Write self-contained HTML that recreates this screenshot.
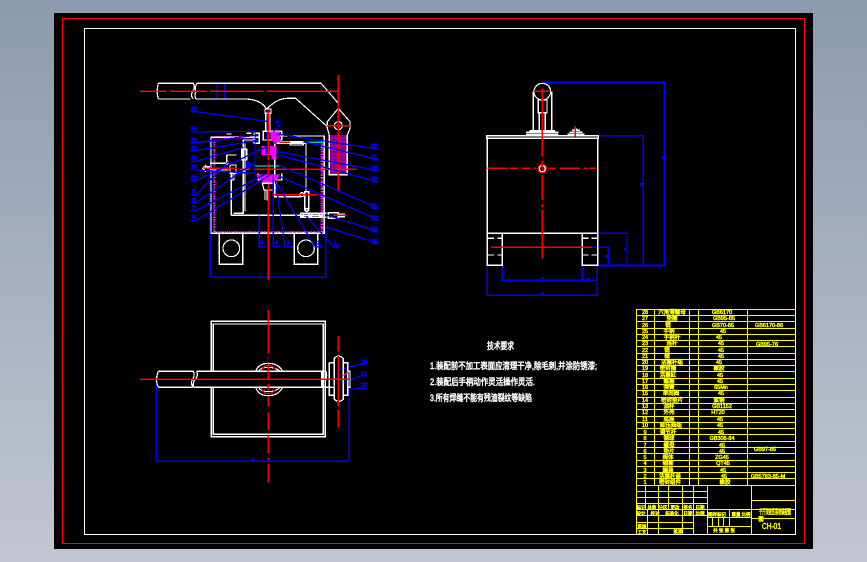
<!DOCTYPE html>
<html><head><meta charset="utf-8"><style>
html,body{margin:0;padding:0;width:867px;height:562px;overflow:hidden;background:linear-gradient(180deg,#8c9aaf 0%,#a8b0c0 50%,#c2c6d1 100%)}
svg{position:absolute;left:0;top:0;display:block}
text{font-family:"Liberation Sans","Noto Sans CJK SC",sans-serif}
</style></head><body>
<svg width="867" height="562" viewBox="0 0 867 562" shape-rendering="crispEdges" fill="none">
<defs>
<pattern id="h" width="4" height="4" patternUnits="userSpaceOnUse"><rect width="4" height="4" fill="#000"/><path d="M0 4L4 0M0 0L4 4" stroke="#ff00ff" stroke-width="1.4"/></pattern>
</defs>
<rect x="54" y="13" width="759" height="536" fill="#000"/>
<rect x="62.5" y="18.5" width="742" height="525" stroke="#f00" stroke-width="1.2"/>
<rect x="84.5" y="28.5" width="711" height="506" stroke="#fff" stroke-width="1.2"/>

<!-- FRONT VIEW -->
<g transform="translate(130 60) scale(.33333)" stroke-width="3.6">
<rect x="598" y="225" width="54" height="119" fill="url(#h)"/>
<path stroke="#00f" stroke-width="4" d="M241 232V652H587V500M415 640V652M262 70H284V117H262Z"/>
<path stroke="#f0f" stroke-width="8" stroke-dasharray="4 3" d="M253 232H385M253 232V517H576V240"/>
<path stroke="#fff" stroke-width="2" stroke-dasharray="2 8" d="M253 232H385M253 232V517H576V240"/>
<path stroke="#fff" d="M85 70H190M85 117H181M85 70Q78 94 85 117M190 70Q197 84 188 94Q180 106 190 117M201 70Q192 84 198 94Q192 108 198 117M201 70H573L625 130M198 117H348M348 117Q392 118 410 147Q442 114 475 115H497L592 200M592 185L625 145L660 185V205L652 225M592 185V205L598 225M598 225V344H652V225"/>
<circle cx="625" cy="197" r="12" stroke="#fff"/>
<path stroke="#fff" d="M243 520V232H385M243 520H583V228H450M268 520V613H338V520M493 520V613H563V520M405 147H423V160H405ZM407 160V215M420 160V215"/>
<circle cx="304" cy="565" r="25" stroke="#fff"/><circle cx="528" cy="565" r="25" stroke="#fff"/>
<path stroke="#fff" d="M304 466H578M310 460H340V240H385M304 466V340M345 250V455M440 250H528V395M434 250V400M450 245H520M373 220H388V250H373ZM400 214H455V240H400ZM385 340V360H455V340M397 370H440L434 390H402ZM405 390V420M412 390V422M434 370V410M432 404H515M432 410H515M524 395H536V450H524ZM510 460H590M510 472H590M595 458H625V475H595ZM625 462H645M625 470H645M290 285H320M290 285V315M295 310H240M295 330H240M225 320H240M218 325L228 315M218 325L228 335M300 315H318V340H300ZM305 340V360H312V340M335 268H350V300H335ZM350 220H365M290 222H305M480 245H520V255H480Z"/>
<circle cx="516" cy="404" r="6" stroke="#fff"/><circle cx="516" cy="465" r="5" stroke="#fff"/><circle cx="541" cy="465" r="5" stroke="#fff"/><circle cx="572" cy="465" r="5" stroke="#fff"/><circle cx="530" cy="450" r="5" stroke="#fff"/>
<path fill="#f0f" stroke="none" d="M395 258H440V298H425V285H395ZM378 344H450L432 368H400ZM420 214H450V248H430L422 232Z"/>
<path fill="#00f" stroke="none" d="M406 258H420V282H406ZM406 216H420V236H406ZM347 305H362V325H347Z"/>
<path stroke="#0ff" stroke-width="4" d="M372 318H455"/>
<path stroke="#0c8" d="M520 247H580"/>
<path stroke="#f00" d="M625 45V395M30 94H110M120 94H230M240 94H400M410 94H625M415 150V300M415 310V360M415 372V660M330 328H360M370 328H680M590 197H660M425 404H562M220 325H320M450 247H480M610 466H650"/>
<path stroke="#00f" stroke-width="4" d="M182 155H198L410 184M182 216H198L375 214V360M182 248H198L385 225M182 272H198L385 240M182 304H198L340 262M182 330H198L375 340M182 362H198L410 260M182 404H198L300 300M182 428H198L370 310M182 452H198L410 340M182 482H198L420 345M440 195H450L430 215M725 267H745L440 222M725 299H745L520 245M725 332H745L445 275M725 366H745L445 285M725 445H745L445 315M725 480H745L450 350M725 515H745L590 465M725 550H745L585 500M388 466V560H408M430 350V560H448M436 360L465 560H490M440 370L555 560H578M530 470L610 560H628"/>
<g fill="#00f" stroke="#00f" stroke-width="1.5" font-size="17" font-weight="bold" text-anchor="middle">
<text x="191" y="152">15</text><text x="191" y="212">16</text><text x="191" y="245">14</text><text x="191" y="268">13</text><text x="191" y="299">18</text><text x="191" y="325">10</text><text x="191" y="358">19</text><text x="191" y="399">9</text><text x="191" y="424">8</text><text x="191" y="448">7</text><text x="191" y="477">6</text><text x="442" y="191">6</text><text x="732" y="263">12</text><text x="732" y="295">11</text><text x="732" y="329">10</text><text x="732" y="361">19</text><text x="732" y="442">21</text><text x="732" y="478">22</text><text x="732" y="512">23</text><text x="732" y="547">24</text><text x="396" y="554">5</text><text x="438" y="554">4</text><text x="476" y="554">3</text><text x="566" y="554">2</text><text x="615" y="554">1</text>
</g>
</g>

<!-- SIDE VIEW -->
<g transform="translate(470 70) scale(.33333)" stroke-width="3.6">
<path stroke="#00f" stroke-width="4" d="M385 197H520V586M383 490H471V583M365 532H415V583M97 586V631H378M52 586V676H382V586M337 586V631"/>
<path stroke="#00f" stroke-width="6" d="M217 37H583V586H383"/>
<path fill="#00f" stroke="none" d="M576 258h8v11h-8zM510 339h10v9h-10zM462 534h5v7h-5zM405 555h9v7h-9zM213 621h8v9h-8zM351 623h8v8h-8zM213 666h8v10h-8z"/>
<path stroke="#fff" d="M190 65V183M245 65V183M205 90H231V128H205ZM208 128V180M226 128V180M178 182H255M168 187H265M168 193H265M292 193H343M298 187H337M306 181H330M312 177H322M50 197H385V205H50ZM52 205H383V490M52 205V586H97V490M52 490H383V586H337V490M52 505H72M82 505H97M337 505H355M365 505H383M52 555H72M82 555H97M337 555H355M365 555H383"/>
<circle cx="217" cy="65" r="25" stroke="#fff"/>
<circle cx="217" cy="296" r="13" stroke="#f00"/>
<circle cx="217" cy="296" r="9" stroke="#fff"/>
<path stroke="#f00" d="M217 55V260M217 272V300M217 315V390M217 402V412M217 420V565M192 64H242M52 295H112M118 295H145M155 295H182M190 295H198M235 295H255M268 295H330M342 295H352M358 295H380M63 532H365M316 168V200"/>
</g>

<!-- TOP VIEW -->
<g transform="translate(140 310) scale(.33333)" stroke-width="3.6">
<path stroke="#00f" stroke-width="4" d="M49 210V454H622M628 235V454M600 178L660 163H680M612 218L660 198H680M618 240L652 235H680"/>
<path fill="#00f" stroke="none" d="M334 445h9v9h-9z"/>
<g fill="#00f" stroke="#00f" stroke-width="1.5" font-size="17" font-weight="bold" text-anchor="middle"><text x="672" y="161">20</text><text x="672" y="196">21</text><text x="672" y="229">13</text></g>
<path stroke="#fff" d="M214 34H556V380H214ZM220 42H550V373H220Z"/>
<path stroke="#fff" d="M347 184Q355 160 385 160Q415 160 428 184M355 184Q362 172 385 172Q408 172 420 184M347 232Q355 257 385 257Q415 257 428 232M355 232Q362 245 385 245Q408 245 420 232"/>
<path stroke="#f00" d="M363 184Q370 166 385 166Q400 166 411 184M363 232Q370 251 385 251Q400 251 411 232"/>
<rect x="160" y="185" width="385" height="46" fill="#000" stroke="none"/>
<path stroke="#fff" d="M55 184H160M55 232H158M55 184Q44 208 55 232M160 184Q166 195 158 208Q150 220 160 232M170 184H558M162 232H545M170 184Q176 195 166 208Q156 220 162 232M545 184V232H584M558 184Q562 195 558 208H584M568 158H582M568 158V256H582M611 158H623V256H611M623 184H630V232H623M583 145Q595 132 610 145V268Q597 280 583 268Z"/>
<path stroke="#f0f" d="M610 197L625 185M578 232L583 228"/>
<path stroke="#f00" d="M385 0V130M385 142V146M385 160V210M385 222V240M385 260V290M385 308V360M385 374V430M385 444V450M385 462V518M0 208H630M595 78V125M595 138V290M595 300V353"/>
</g>

<!-- NOTES -->
<g fill="#fff" stroke="#fff" stroke-width=".55" font-size="9" shape-rendering="auto">
<text x="487" y="349" textLength="27" lengthAdjust="spacingAndGlyphs">技术要求</text>
<text x="430" y="369" textLength="167" lengthAdjust="spacingAndGlyphs">1.装配前不加工表面应清理干净,除毛刺,并涂防锈漆;</text>
<text x="430" y="385" textLength="105" lengthAdjust="spacingAndGlyphs">2.装配后手柄动作灵活操作灵活.</text>
<text x="430" y="401" textLength="102" lengthAdjust="spacingAndGlyphs">3.所有焊缝不能有残渣裂纹等缺陷</text>
</g>

<!-- TABLE -->
<g stroke="#ff0" stroke-width="1">
<path d="M636.5 309.5H795M636.5 315.5H795M636.5 321.5H795M636.5 328.5H795M636.5 334.5H795M636.5 340.5H795M636.5 346.5H795M636.5 353.5H795M636.5 359.5H795M636.5 365.5H795M636.5 371.5H795M636.5 378.5H795M636.5 384.5H795M636.5 390.5H795M636.5 397.5H795M636.5 403.5H795M636.5 409.5H795M636.5 416.5H795M636.5 422.5H795M636.5 428.5H795M636.5 434.5H795M636.5 441.5H795M636.5 447.5H795M636.5 453.5H795M636.5 460.5H795M636.5 466.5H795M636.5 472.5H795M636.5 478.5H795M636.5 485.5H795"/>
<path d="M636.5 309V534M654.5 309V485M689.5 309V485M698.5 309V485M747.5 309V485"/>
<path d="M636 491.5H707M636 497.5H707M636 503.5H707M636 509.5H707M636 515.5H707M636 522.5H693M636 528.5H693"/>
<path d="M645.5 485V509M658.5 485V534M668.5 485V509M682.5 485V534M693.5 485V534M647.5 509V534"/>
<path d="M707.5 485V534M751.5 485V534M707 509.5H795M707 517.5H751M707 526.5H751M751 500.5H795M751 518.5H795M729.5 509V526M712.5 517V526M718.5 517V526M723.5 517V526"/>
</g>
<g fill="#ff0" stroke="#ff0" stroke-width=".45" font-size="5.5" shape-rendering="auto" text-anchor="middle">
<text x="645" y="314">28</text><text x="672" y="314">六角薄螺母</text><text x="722" y="314">GB6170</text>
<text x="645" y="320">27</text><text x="672" y="320">垫圈</text><text x="724" y="320">GB95-85</text><text x="769" y="327">GB6170-86</text>
<text x="645" y="327">26</text><text x="668" y="327">销</text><text x="723" y="327">GB70-85</text>
<text x="645" y="333">25</text><text x="669" y="333">手柄</text><text x="723" y="333">45</text>
<text x="645" y="339">24</text><text x="672" y="339">手柄杆</text><text x="719" y="339">45</text><text x="767" y="346">GB95-76</text>
<text x="645" y="345">23</text><text x="672" y="345">连杆</text><text x="721" y="345">45</text>
<text x="645" y="352">22</text><text x="667" y="352">销</text><text x="721" y="352">45</text>
<text x="645" y="358">21</text><text x="667" y="358">轴</text><text x="721" y="358">45</text>
<text x="645" y="364">20</text><text x="672" y="364">活塞杆组</text><text x="719" y="364">45</text>
<text x="645" y="370">19</text><text x="668" y="370">密封圈</text><text x="719" y="370">橡胶</text>
<text x="645" y="377">18</text><text x="668" y="377">活塞缸</text><text x="720" y="377">45</text>
<text x="645" y="383">17</text><text x="669" y="383">螺塞</text><text x="720" y="383">45</text>
<text x="645" y="389">16</text><text x="669" y="389">弹簧</text><text x="721" y="389">65Mn</text>
<text x="645" y="395">15</text><text x="671" y="395">单向阀</text><text x="721" y="395">45</text>
<text x="645" y="402">14</text><text x="672" y="402">密封垫片</text><text x="719" y="402">紫铜</text>
<text x="645" y="408">13</text><text x="669" y="408">油杯</text><text x="722" y="408">GB1152</text>
<text x="645" y="414">12</text><text x="669" y="414">外壳</text><text x="718" y="414">HT20</text>
<text x="645" y="421">11</text><text x="669" y="421">底座</text><text x="720" y="421">45</text>
<text x="645" y="427">10</text><text x="671" y="427">卸压阀组</text><text x="720" y="427">45</text>
<text x="645" y="434">9</text><text x="668" y="434">调节杆</text><text x="721" y="434">45</text>
<text x="645" y="440">8</text><text x="669" y="440">钢球</text><text x="722" y="440">GB308-84</text>
<text x="645" y="447">7</text><text x="669" y="447">螺母</text><text x="722" y="447">45</text>
<text x="645" y="453">6</text><text x="669" y="453">垫片</text><text x="722" y="453">45</text><text x="765" y="451">GB97-85</text>
<text x="645" y="459">5</text><text x="668" y="459">阀体</text><text x="722" y="459">ZG45</text>
<text x="645" y="465">4</text><text x="668" y="465">轴套</text><text x="723" y="465">QT45</text>
<text x="645" y="472">3</text><text x="668" y="472">端盖</text><text x="723" y="472">45</text>
<text x="645" y="478">2</text><text x="670" y="478">活塞杆盖</text><text x="724" y="478">45</text><text x="768" y="478">GB5783-85-M</text>
<text x="645" y="484">1</text><text x="670" y="484">密封组件</text><text x="725" y="484">橡胶</text>
<text x="641" y="509" font-size="4.5">标记</text><text x="652" y="509" font-size="4.5">处数</text><text x="663" y="509" font-size="4.5">分区</text><text x="675" y="509" font-size="4.5">更改</text><text x="688" y="509" font-size="4.5">签名</text><text x="700" y="509" font-size="4.5">日期</text>
<text x="641" y="515" font-size="4.5">设计</text><text x="655" y="515" font-size="4.5">校对</text><text x="672" y="515" font-size="4.5">标准化</text><text x="688" y="515" font-size="4.5">日期</text><text x="700" y="515" font-size="4.5">比例</text>
<text x="717" y="516" font-size="4.5">图样标记</text><text x="736" y="516" font-size="4.5">重量</text><text x="746" y="516" font-size="4.5">比例</text>
<text x="642" y="528" font-size="4.5">审核</text><text x="642" y="534" font-size="4.5">工艺</text><text x="678" y="533" font-size="4.5">批准</text>
<text x="724" y="532" font-size="4.5">共 张 第 张</text>
<text x="759" y="514" font-size="7" text-anchor="start" textLength="32" lengthAdjust="spacingAndGlyphs">千斤顶液压系统装配图</text>
<text x="761" y="521" font-size="5.5">图</text>
<text x="762" y="529" font-size="8" text-anchor="start" textLength="19" lengthAdjust="spacingAndGlyphs">CH-01</text>
</g>
</svg>
</body></html>
